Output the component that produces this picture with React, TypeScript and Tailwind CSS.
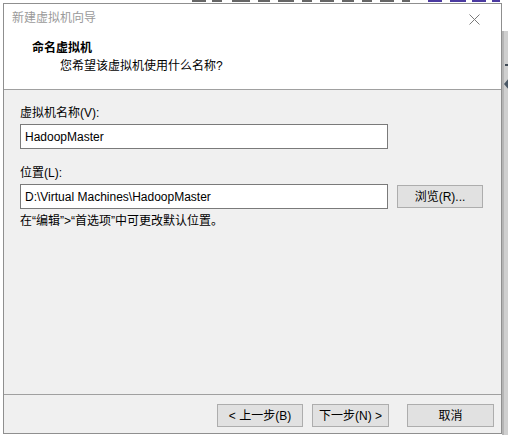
import React from "react";

const font = { fontFamily: '"Liberation Sans", "Noto Sans CJK SC", sans-serif' };

function Btn({ children, w }: { children: React.ReactNode; w: string }) {
  return (
    <div
      className={`${w} h-[23px] flex items-center justify-center border border-[#adadad] bg-[#e1e1e1] text-[12px] text-black leading-none`}
    >
      {children}
    </div>
  );
}

const topMarks = [
  { l: 192, w: 14, c: "bg-[#666]" },
  { l: 212, w: 10, c: "bg-[#666]" },
  { l: 232, w: 18, c: "bg-[#666]" },
  { l: 258, w: 12, c: "bg-[#666]" },
  { l: 278, w: 16, c: "bg-[#666]" },
  { l: 302, w: 10, c: "bg-[#666]" },
  { l: 320, w: 14, c: "bg-[#666]" },
  { l: 342, w: 12, c: "bg-[#666]" },
  { l: 362, w: 10, c: "bg-[#666]" },
  { l: 380, w: 14, c: "bg-[#666]" },
  { l: 402, w: 8, c: "bg-[#666]" },
  { l: 428, w: 14, c: "bg-[#4b3aa0]" },
  { l: 450, w: 16, c: "bg-[#4b3aa0]" },
  { l: 472, w: 14, c: "bg-[#4b3aa0]" },
  { l: 492, w: 8, c: "bg-[#4b3aa0]" },
];

export default function App() {
  return (
    <div className="w-[508px] h-[435px] overflow-hidden bg-white relative" style={font}>
      {/* top background strip */}
      <div className="h-[3px] w-full relative bg-white">
        {topMarks.map((m, i) => (
          <div
            key={i}
            className={`absolute top-0 h-[2px] ${m.c}`}
            style={{ left: m.l, width: m.w }}
          />
        ))}
      </div>
      <div className="flex h-[432px]">
        <div className="w-[3px] bg-white" />
        {/* dialog */}
        <div className="w-[499px] h-[431px] border border-[#8f8f8f] flex flex-col bg-[#f0f0f0]">
          {/* header */}
          <div className="h-[86px] bg-white border-b border-[#a0a0a0] flex flex-col">
            <div className="flex items-center justify-between pl-[8px] pr-[21px] pt-[6px]">
              <span className="text-[12px] leading-[16px] text-[#9a9a9a]">新建虚拟机向导</span>
              <svg width="11" height="11" viewBox="0 0 11 11" className="mt-[2px]">
                <path d="M0.5 0.5 L10.5 10.5 M10.5 0.5 L0.5 10.5" stroke="#7a7a7a" strokeWidth="1" />
              </svg>
            </div>
            <div className="pl-[28px] pt-[14px] text-[12px] leading-[16px] font-bold text-black">命名虚拟机</div>
            <div className="pl-[56px] pt-[2px] text-[12px] leading-[16px] text-black">您希望该虚拟机使用什么名称?</div>
          </div>
          {/* body */}
          <div className="flex-1 pl-[16px] pt-[15px] flex flex-col">
            <div className="text-[12px] leading-[16px] text-black">虚拟机名称(V):</div>
            <div className="mt-[3px] w-[368px] h-[25px] bg-white border border-[#7a7a7a] flex items-center pl-[4px] text-[12px] text-black">
              HadoopMaster
            </div>
            <div className="mt-[16px] text-[12px] leading-[16px] text-black">位置(L):</div>
            <div className="mt-[3px] flex items-start">
              <div className="w-[368px] h-[25px] bg-white border border-[#7a7a7a] flex items-center pl-[4px] text-[12px] text-black">
                D:\Virtual Machines\HadoopMaster
              </div>
              <div className="ml-[9px] mt-[1px]">
                <Btn w="w-[86px]">浏览(R)...</Btn>
              </div>
            </div>
            <div className="mt-[4px] text-[12px] leading-[16px] text-black">在“编辑”&gt;“首选项”中可更改默认位置。</div>
          </div>
          {/* footer */}
          <div className="h-[39px] border-t border-[#a0a0a0] flex items-start pt-[9px]">
            <div className="ml-[213px]">
              <Btn w="w-[86px]">&lt; 上一步(B)</Btn>
            </div>
            <div className="ml-[9px]">
              <Btn w="w-[77px]">下一步(N) &gt;</Btn>
            </div>
            <div className="ml-[18px]">
              <Btn w="w-[87px]">取消</Btn>
            </div>
          </div>
        </div>
        {/* right background strip */}
        <div className="w-[6px] flex flex-col">
          <div className="h-[28px] bg-white" />
          <div className="flex-1 bg-[#cfcfcf] border-l-2 border-[#b5b5b5] relative">
            <div className="absolute left-[1px] top-[33px] w-[4px] h-[2px] bg-[#3f4a55]" />
            <div className="absolute left-[0px] top-[47px] w-0 h-0 border-y-[6px] border-y-transparent border-r-[5px] border-r-[#4a5866]" />
          </div>
        </div>
      </div>
    </div>
  );
}
